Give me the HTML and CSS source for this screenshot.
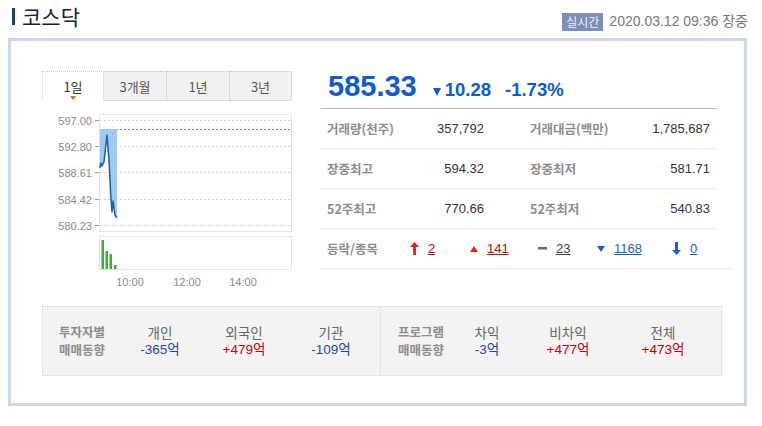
FILE: index.html
```html
<!DOCTYPE html>
<html lang="ko">
<head>
<meta charset="utf-8">
<title>코스닥</title>
<link rel="stylesheet" href="styles.css">
</head>
<body>
<header class="head">
  <h1 class="title"><span class="title-bar"></span>코스닥</h1>
  <div class="stamp"><span class="badge">실시간</span><span class="date">2020.03.12 09:36 장중</span></div>
</header>

<section class="box">
  <div class="main">
    <div class="chart-col">
      <div class="tabs">
        <div class="tab active"><span class="tab-text">1일</span><span class="tab-mark"></span></div>
        <div class="tab"><span class="tab-text">3개월</span></div>
        <div class="tab"><span class="tab-text">1년</span></div>
        <div class="tab"><span class="tab-text">3년</span></div>
      </div>
      <svg class="chart" width="250" height="192" viewBox="42 100 250 192">
        <g class="grid">
          <line x1="100" y1="120.5" x2="291" y2="120.5"/>
          <line x1="100" y1="146.5" x2="291" y2="146.5"/>
          <line x1="100" y1="172.5" x2="291" y2="172.5"/>
          <line x1="100" y1="199.5" x2="291" y2="199.5"/>
          <line x1="100" y1="225.5" x2="291" y2="225.5"/>
        </g>
        <line class="ref" x1="100" y1="129.5" x2="291" y2="129.5"/>
        <rect class="frame" x="99.5" y="114.5" width="192" height="117"/>
        <g class="ticks">
          <line x1="95" y1="120.5" x2="99" y2="120.5"/>
          <line x1="95" y1="146.5" x2="99" y2="146.5"/>
          <line x1="95" y1="172.5" x2="99" y2="172.5"/>
          <line x1="95" y1="199.5" x2="99" y2="199.5"/>
          <line x1="95" y1="225.5" x2="99" y2="225.5"/>
        </g>
        <g class="ylab">
          <text x="92" y="124.5">597.00</text>
          <text x="92" y="150.5">592.80</text>
          <text x="92" y="176.5">588.61</text>
          <text x="92" y="203.5">584.42</text>
          <text x="92" y="229.5">580.23</text>
        </g>
        <polygon class="area" points="100,129 117,129 117,218 115,215 113,201 112,212 111,200 109,160 107,135 104,162 102,166 101,163 100,168"/>
        <polyline class="price" points="100,168 101,163 102,166 104,162 107,135 109,160 111,200 112,212 113,201 115,215 117,218"/>
        <rect class="frame" x="99.5" y="236.5" width="192" height="33"/>
        <g class="vol">
          <rect x="101.5" y="240" width="2.5" height="29"/>
          <rect x="105.5" y="251" width="2.5" height="18"/>
          <rect x="109.5" y="254" width="2.5" height="15"/>
          <rect x="114" y="265" width="2.5" height="4"/>
        </g>
        <g class="xlab">
          <text x="130" y="286">10:00</text>
          <text x="187" y="286">12:00</text>
          <text x="243" y="286">14:00</text>
        </g>
      </svg>
    </div>

    <div class="info-col">
      <div class="price-row">
        <span class="price-now">585.33</span>
        <span class="price-chg"><svg class="tri" width="8" height="8" viewBox="0 0 8 8"><path d="M0 0H8L4 8Z"/></svg>10.28</span>
        <span class="price-pct">-1.73%</span>
      </div>
      <div class="stat-row">
        <span class="lbl">거래량(천주)</span><span class="val">357,792</span>
        <span class="lbl lbl2">거래대금(백만)</span><span class="val">1,785,687</span>
      </div>
      <div class="stat-row">
        <span class="lbl">장중최고</span><span class="val">594.32</span>
        <span class="lbl lbl2">장중최저</span><span class="val">581.71</span>
      </div>
      <div class="stat-row">
        <span class="lbl">52주최고</span><span class="val">770.66</span>
        <span class="lbl lbl2">52주최저</span><span class="val">540.83</span>
      </div>
      <div class="updown-row">
        <span class="lbl">등락/종목</span>
        <span class="ud"><svg class="ico" width="9" height="13" viewBox="0 0 9 13"><path class="up" d="M4.5 0L9 5H6V13H3V5H0Z"/></svg><a class="num red">2</a></span>
        <span class="ud"><svg class="ico" width="8" height="6" viewBox="0 0 8 6"><path class="up" d="M4 0L8 6H0Z"/></svg><a class="num red">141</a></span>
        <span class="ud"><svg class="ico" width="9" height="3" viewBox="0 0 9 3"><rect class="flat" x="0" y="0" width="9" height="2.5"/></svg><a class="num gray">23</a></span>
        <span class="ud"><svg class="ico" width="8" height="6" viewBox="0 0 8 6"><path class="dn" d="M0 0H8L4 6Z"/></svg><a class="num blue">1168</a></span>
        <span class="ud"><svg class="ico" width="9" height="13" viewBox="0 0 9 13"><path class="dn" d="M3 0H6V8H9L4.5 13L0 8H3Z"/></svg><a class="num blue">0</a></span>
      </div>
    </div>
  </div>

  <div class="flow">
    <div class="flow-half">
      <div class="flow-lbl">투자자별<br>매매동향</div>
      <div class="flow-item"><span class="fi-name">개인</span><span class="fi-val blue">-365억</span></div>
      <div class="flow-item"><span class="fi-name">외국인</span><span class="fi-val red">+479억</span></div>
      <div class="flow-item"><span class="fi-name">기관</span><span class="fi-val blue">-109억</span></div>
    </div>
    <div class="flow-half flow-prog">
      <div class="flow-lbl">프로그램<br>매매동향</div>
      <div class="flow-item"><span class="fi-name">차익</span><span class="fi-val blue">-3억</span></div>
      <div class="flow-item"><span class="fi-name">비차익</span><span class="fi-val red">+477억</span></div>
      <div class="flow-item"><span class="fi-name">전체</span><span class="fi-val red">+473억</span></div>
    </div>
  </div>
</section>
</body>
</html>
```

FILE: styles.css
```css
* { box-sizing: border-box; }

html, body {
  margin: 0;
  padding: 0;
  background: #ffffff;
}

body {
  width: 762px;
  font-family: "Liberation Sans", "Noto Sans CJK KR", sans-serif;
  color: #333;
}

/* ---------- header ---------- */
.head {
  display: flex;
  justify-content: space-between;
  align-items: flex-start;
  height: 38px;
  padding: 0 14px 0 12px;
}

.title {
  display: flex;
  align-items: center;
  gap: 7px;
  margin: 4px 0 0;
  height: 24px;
  font-family: "Noto Sans CJK KR", sans-serif;
  font-size: 21px;
  font-weight: 400;
  line-height: 24px;
  color: #1c1c2c;
}

.title-bar {
  display: block;
  width: 3px;
  height: 17px;
  background: #1b3a8e;
}

.stamp {
  display: flex;
  align-items: center;
  margin-top: 12px;
  height: 19px;
}

.badge {
  display: block;
  height: 18px;
  padding: 0 4px;
  background: #7d8eb9;
  color: #eef1f8;
  font-family: "Noto Sans CJK KR", sans-serif;
  font-size: 12px;
  line-height: 18px;
}

.date {
  margin-left: 6px;
  font-size: 14px;
  line-height: 19px;
  color: #777;
}

/* ---------- main box ---------- */
.box {
  width: 739px;
  height: 368px;
  margin-left: 8px;
  border: 3px solid #cbd8ec;
  padding: 30px 0 0 31px;
}

.main {
  display: flex;
  gap: 29px;
  height: 221px;
}

.chart-col {
  width: 250px;
}

/* tabs */
.tabs {
  display: grid;
  grid-template-columns: 62px 63px 63px 62px;
  height: 29px;
}

.tab {
  display: flex;
  flex-direction: column;
  align-items: center;
  padding-top: 7px;
  border-top: 1px dotted #c4c4c4;
  border-right: 1px dotted #c4c4c4;
  border-bottom: 1px dotted #c4c4c4;
  background: #f1f1f1;
}

.tab:first-child {
  border-left: 1px dotted #c4c4c4;
}

.tab.active {
  background: #ffffff;
  border-bottom-color: transparent;
}

.tab-text {
  font-family: "Noto Sans CJK KR", sans-serif;
  font-size: 13px;
  line-height: 16px;
  color: #555;
}

.tab.active .tab-text {
  color: #333;
}

.tab-mark {
  width: 0;
  height: 0;
  margin-top: 1px;
  border-left: 3.5px solid transparent;
  border-right: 3.5px solid transparent;
  border-top: 4px solid #ee6b22;
}

/* chart svg */
.chart {
  display: block;
}

.chart .grid line {
  stroke: #d6d6d6;
  stroke-width: 1;
  stroke-dasharray: 2 2;
}

.chart .ref {
  stroke: #8a8a8a;
  stroke-width: 1;
  stroke-dasharray: 2 2;
}

.chart .frame {
  fill: none;
  stroke: #c6c6c6;
  stroke-width: 1;
  stroke-dasharray: 1 1;
}

.chart .ticks line {
  stroke: #999;
  stroke-width: 1;
}

.chart .ylab text {
  font-family: "Liberation Sans", sans-serif;
  font-size: 11px;
  fill: #8a8a8a;
  text-anchor: end;
}

.chart .xlab text {
  font-family: "Liberation Sans", sans-serif;
  font-size: 11px;
  fill: #8a8a8a;
  text-anchor: middle;
}

.chart .area {
  fill: #9fc9ee;
}

.chart .price {
  fill: none;
  stroke: #1d5fa9;
  stroke-width: 1.5;
  stroke-linejoin: round;
}

.chart .vol rect {
  fill: #39b039;
}

/* info column */
.info-col {
  width: 396px;
}

.price-row {
  display: flex;
  align-items: baseline;
  height: 38px;
  padding-left: 7px;
  border-bottom: 1px solid #b8b8b8;
  color: #0e5bcf;
  font-weight: 700;
}

.price-now {
  font-size: 29px;
  line-height: 30px;
}

.price-chg {
  margin-left: 16px;
  font-size: 18.5px;
  line-height: 30px;
}

.tri {
  margin-right: 4px;
  fill: #0e5bcf;
}

.price-pct {
  margin-left: 14px;
  font-size: 18.5px;
  line-height: 30px;
}

.stat-row {
  display: grid;
  grid-template-columns: 89px 74px 156px 70px;
  align-items: center;
  height: 40px;
  border-bottom: 1px dotted #d2d2d2;
}

.lbl {
  padding-left: 6px;
  font-family: "Noto Sans CJK KR", sans-serif;
  font-size: 12.5px;
  font-weight: 700;
  line-height: 16px;
  color: #8c8c8c;
}

.lbl2 {
  padding-left: 46px;
}

.val {
  text-align: right;
  font-size: 13px;
  line-height: 16px;
  color: #333;
}

.updown-row {
  display: grid;
  grid-template-columns: 89px 60px 68px 59px 75px auto;
  align-items: center;
  height: 40px;
  margin-right: -14px;
  border-bottom: 1px dotted #d2d2d2;
}

.ud {
  display: flex;
  align-items: center;
  gap: 9px;
}

.ico {
  display: block;
}

.ico .up { fill: #e2231a; }
.ico .dn { fill: #1a5fc8; }
.ico .flat { fill: #666; }

.num {
  font-size: 13px;
  line-height: 16px;
  text-decoration: underline;
}

.red { color: #c8000a; }
.blue { color: #1c46a8; }
.num.blue { color: #1a5fc8; }
.gray { color: #444; }

/* ---------- investor flow panel ---------- */
.flow {
  display: flex;
  width: 680px;
  height: 70px;
  margin-top: 14px;
  border: 1px dotted #d6d6d6;
  background: #f3f3f3;
}

.flow-half {
  display: grid;
  grid-template-columns: 60px 82px 86px 88px;
  width: 338px;
  padding: 16px 0 0 16px;
  border-right: 1px dotted #d6d6d6;
}

.flow-prog {
  grid-template-columns: 52px 74px 88px 102px;
  width: auto;
  flex: 1;
  padding-left: 17px;
  border-right: none;
}

.flow-lbl {
  font-family: "Noto Sans CJK KR", sans-serif;
  font-size: 12.5px;
  font-weight: 700;
  line-height: 18px;
  color: #8c8c8c;
}

.flow-item {
  display: flex;
  flex-direction: column;
  align-items: center;
}

.fi-name {
  font-family: "Noto Sans CJK KR", sans-serif;
  font-size: 13.5px;
  line-height: 18px;
  color: #666;
}

.fi-val {
  font-size: 13.5px;
  line-height: 18px;
}
```
